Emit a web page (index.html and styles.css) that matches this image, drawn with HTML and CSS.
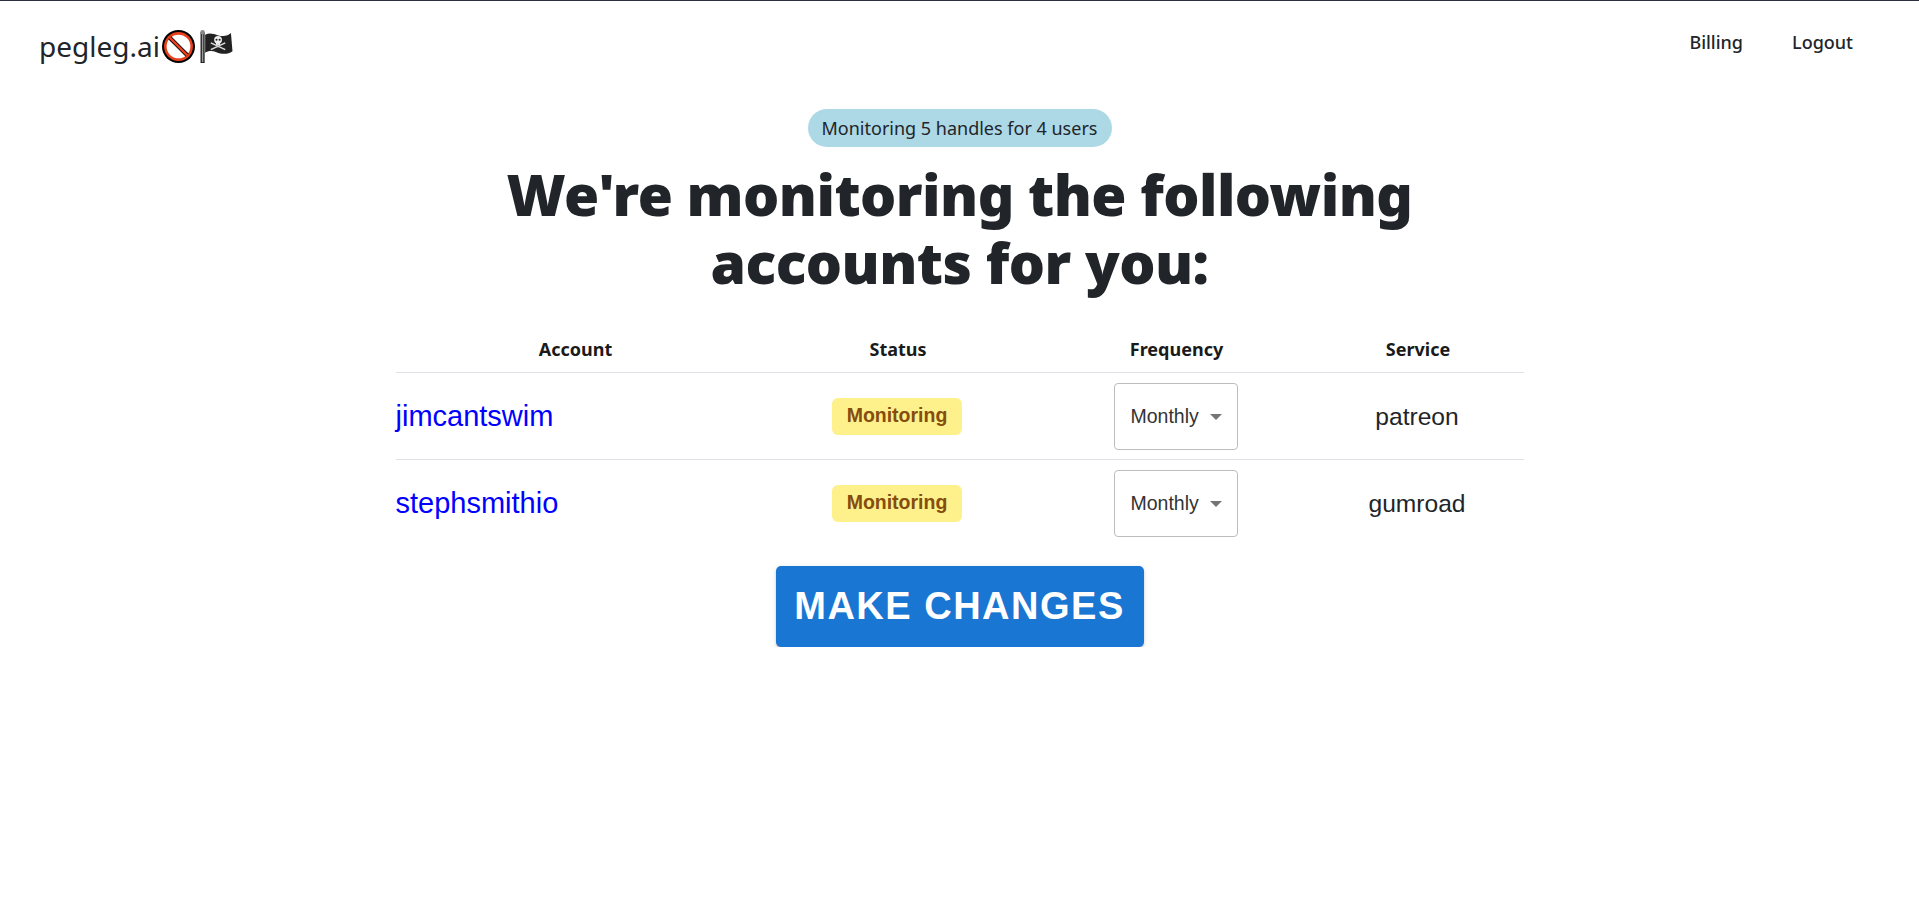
FILE: index.html
```html
<!DOCTYPE html>
<html>

<head>
  <meta charset="utf-8">
  <title>pegleg.ai</title>
  <link rel="stylesheet" href="styles.css">
</head>

<body>
  <nav class="navbar">
    <a class="brand" href="#">
      <span>pegleg.ai</span>
      <svg class="emoji" viewBox="0 0 32 32" aria-hidden="true">
        <circle cx="16" cy="16" r="16" fill="#000" />
        <circle cx="16" cy="16" r="14" fill="#e8401c" />
        <circle cx="16" cy="16" r="11.500" fill="#fff" />
        <path d="M7.500 7.500 L24.500 24.500" stroke="#000" stroke-width="4" />
        <path d="M7.500 7.500 L24.500 24.500" stroke="#e8401c" stroke-width="2.400" />
      </svg>
      <svg class="emoji flag" viewBox="0 0 32 32" aria-hidden="true">
        <rect x="0.500" y="2" width="4" height="30" fill="#222" />
        <rect x="1.800" y="2" width="1.400" height="29" fill="#999" />
        <circle cx="2.500" cy="2.200" r="2.200" fill="#888" />
        <path d="M5 4.500 C9 2.500 13 3.500 17 5 C22 6.500 27 6 30 3 L31.500 20.500 C27 24 21 23.500 16 21.500 C12 20 8 20 5 22 Z" fill="#222" />
        <circle cx="17.500" cy="9.500" r="3.800" fill="#eee" />
        <rect x="15.500" y="12" width="4" height="2.500" fill="#eee" />
        <circle cx="16" cy="9.500" r="1" fill="#222" />
        <circle cx="19" cy="9.500" r="1" fill="#222" />
        <path d="M10.500 12.500 L24.500 19 M24.500 12.500 L10.500 19" stroke="#ddd" stroke-width="1.500" />
      </svg>
    </a>
    <div class="nav-links">
      <a href="#">Billing</a>
      <a href="#">Logout</a>
    </div>
  </nav>

  <main class="content">
    <div class="pill">Monitoring 5 handles for 4 users</div>
    <h1 class="title">We're monitoring the following<br>accounts for you:</h1>

    <table class="accounts">
      <thead>
        <tr>
          <th class="col-account">Account</th>
          <th class="col-status">Status</th>
          <th class="col-frequency">Frequency</th>
          <th class="col-service">Service</th>
        </tr>
      </thead>
      <tbody>
        <tr>
          <td class="account"><a href="#">jimcantswim</a></td>
          <td><span class="badge">Monitoring</span></td>
          <td>
            <div class="select-box">
              <select>
                <option>Monthly</option>
                <option>Weekly</option>
              </select>
            </div>
          </td>
          <td>patreon</td>
        </tr>
        <tr>
          <td class="account"><a href="#">stephsmithio</a></td>
          <td><span class="badge">Monitoring</span></td>
          <td>
            <div class="select-box">
              <select>
                <option>Monthly</option>
                <option>Weekly</option>
              </select>
            </div>
          </td>
          <td>gumroad</td>
        </tr>
      </tbody>
    </table>

    <button class="make-changes">MAKE CHANGES</button>
  </main>
</body>

</html>
```

FILE: styles.css
```css
* {
  box-sizing: border-box;
}

body {
  margin: 0;
  border-top: 1px solid #2b2f3f;
  font-family: "Noto Sans", sans-serif;
  color: #212529;
  background: #ffffff;
}

a {
  text-decoration: none;
  color: inherit;
}

.navbar {
  display: flex;
  justify-content: space-between;
  align-items: center;
  height: 90px;
  padding: 0 66px 0 39px;
}

.brand {
  display: flex;
  align-items: center;
  gap: 2px;
  font-size: 28px;
}

.emoji {
  width: 33px;
  height: 33px;
}

.flag {
  margin-left: 3px;
}

.nav-links {
  display: flex;
  gap: 49px;
  margin-bottom: 8px;
  font-size: 18px;
  font-weight: 500;
}

.content {
  display: flex;
  flex-direction: column;
  align-items: center;
  padding-top: 18px;
}

.pill {
  width: 304px;
  height: 38px;
  line-height: 38px;
  text-align: center;
  font-size: 18px;
  background: #add8e6;
  border-radius: 19px;
}

.title {
  margin: 13px 0 0;
  text-align: center;
  font-size: 57px;
  line-height: 68px;
  font-weight: 900;
  letter-spacing: -0.550px;
}

.accounts {
  margin-top: 30px;
  width: 1128px;
  border-collapse: collapse;
  table-layout: fixed;
  font-family: "Liberation Sans", Arial, sans-serif;
  font-size: 24.600px;
}

.accounts th {
  height: 46px;
  padding: 0 0 0 2px;
  font-family: "Noto Sans", sans-serif;
  font-size: 18px;
  font-weight: 700;
  color: #1a1a1a;
  border-bottom: 1px solid #dee2e6;
}

.accounts td {
  height: 87px;
  padding: 2px 0 0;
  text-align: center;
  border-bottom: 1px solid #dee2e6;
}

.accounts tbody tr:last-child td {
  border-bottom: none;
}

.col-account {
  width: 358px;
}

.col-status {
  width: 287px;
}

.col-frequency {
  width: 270px;
}

.accounts td.account {
  text-align: left;
  font-size: 29px;
  color: #0000ff;
}

.badge {
  display: inline-block;
  width: 130px;
  height: 37px;
  line-height: 35px;
  font-size: 19.500px;
  font-weight: 700;
  color: #854d0e;
  background: #fef08a;
  border-radius: 6px;
}

.select-box {
  position: relative;
  width: 124px;
  height: 67px;
  margin: -1px auto 0;
}

.select-box select {
  width: 100%;
  height: 100%;
  padding: 0 32px 0 16px;
  appearance: none;
  font-family: "Liberation Sans", Arial, sans-serif;
  font-size: 19.500px;
  color: #333333;
  background: #ffffff;
  border: 1px solid #bdbdbd;
  border-radius: 4px;
}

.select-box::after {
  content: "";
  position: absolute;
  top: 31px;
  right: 16px;
  border-left: 6px solid transparent;
  border-right: 6px solid transparent;
  border-top: 6px solid #757575;
  pointer-events: none;
}

.make-changes {
  margin-top: 20px;
  width: 368px;
  height: 81px;
  font-family: "Liberation Sans", Arial, sans-serif;
  font-size: 38px;
  font-weight: 700;
  letter-spacing: 1.500px;
  color: #ffffff;
  background: #1976d2;
  border: none;
  border-radius: 5px;
  box-shadow: 0 3px 1px -2px rgba(0, 0, 0, 0.2), 0 2px 2px 0 rgba(0, 0, 0, 0.14), 0 1px 5px 0 rgba(0, 0, 0, 0.12);
  cursor: pointer;
}
```
